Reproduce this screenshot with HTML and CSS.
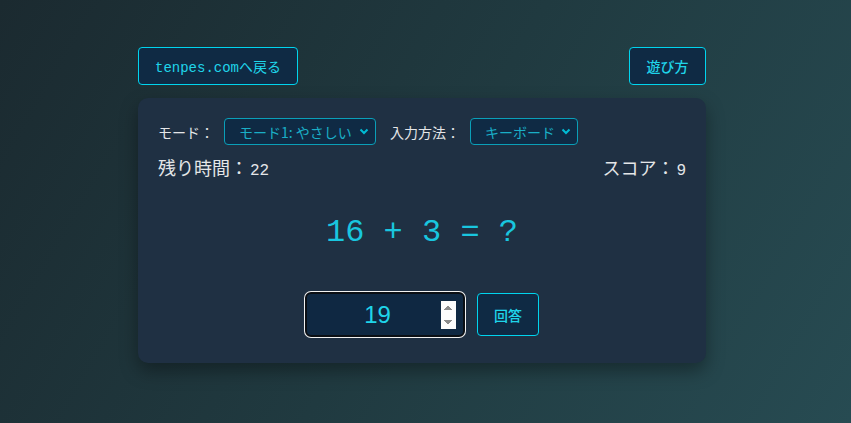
FILE: index.html
```html
<!DOCTYPE html>
<html lang="ja">
<head>
  <meta charset="UTF-8" />
  <meta name="viewport" content="width=device-width, initial-scale=1.0" />
  <title>足し算ゲーム</title>
  <link rel="stylesheet" href="styles.css">
</head>
<body>
  <div class="wrap">
    <div class="top-bar">
      <a href="#" class="btn btn-back">tenpes.comへ戻る</a>
      <button class="btn btn-help">遊び方</button>
    </div>

    <div class="card">
      <div class="settings">
        <label class="label">モード：</label>
        <select class="select select-mode">
          <option>モード1: やさしい</option>
          <option>モード2: ふつう</option>
          <option>モード3: むずかしい</option>
        </select>
        <label class="label label-input">入力方法：</label>
        <select class="select select-input">
          <option>キーボード</option>
          <option>ボタン</option>
        </select>
      </div>

      <div class="status">
        <div class="stat">残り時間：<span class="num">22</span></div>
        <div class="stat">スコア：<span class="num">9</span></div>
      </div>

      <div class="question">16 + 3 = ?</div>

      <div class="answer-row">
        <input type="number" class="answer" value="19" autofocus />
        <button class="btn btn-answer">回答</button>
      </div>
    </div>
  </div>
</body>
</html>
```

FILE: styles.css
```css
body {
  margin: 0;
  min-height: 100vh;
  background: linear-gradient(120deg, #1b2a30 0%, #203a40 50%, #274b52 100%);
  font-family: "Noto Sans CJK JP", "Noto Sans", sans-serif;
  color: #e4e6e8;
}

.wrap {
  width: 568px;
  margin-left: 138px;
  padding-top: 47px;
}

.top-bar {
  display: flex;
  justify-content: space-between;
  margin-bottom: 13px;
}

.btn {
  background: #0f2a44;
  color: #1fd5ea;
  border: 1px solid #00d4ee;
  border-radius: 4px;
  font-size: 14px;
  cursor: pointer;
  text-decoration: none;
  display: flex;
  align-items: center;
  justify-content: center;
  box-sizing: border-box;
  font-family: "Noto Sans CJK JP", "Noto Sans", sans-serif;
}

.btn-back {
  width: 160px;
  height: 38px;
  font-family: "Liberation Mono", "Noto Sans CJK JP", monospace;
  font-size: 14px;
}

.btn-help {
  width: 77px;
  height: 38px;
  font-weight: 500;
}

.card {
  background: #1f3043;
  border-radius: 10px;
  padding: 20px 20px 26px;
  box-shadow: 0 8px 18px rgba(0, 0, 0, 0.35);
}

.settings {
  display: flex;
  align-items: center;
  height: 27px;
  font-size: 14px;
}

.label {
  color: #e4e6e8;
  margin-right: 10px;
}

.label-input {
  margin-left: 14px;
}

.select {
  appearance: none;
  -webkit-appearance: none;
  height: 27px;
  box-sizing: border-box;
  background: #0f2a44 url("data:image/svg+xml;utf8,<svg xmlns='http://www.w3.org/2000/svg' width='10' height='7' viewBox='0 0 10 7'><path d='M1.5 1.5 L5 5 L8.5 1.5' fill='none' stroke='%2300bcd4' stroke-width='2'/></svg>") no-repeat right 6px center;
  color: #1aaec6;
  border: 1px solid #0a9fb8;
  border-radius: 4px;
  font-family: "Noto Sans CJK JP", "Noto Sans", sans-serif;
  font-size: 14px;
  padding: 0 20px 0 14px;
}

.select-mode { width: 152px; }
.select-input { width: 108px; }

.status {
  display: flex;
  justify-content: space-between;
  align-items: center;
  margin-top: 10px;
  height: 24px;
  font-size: 18px;
  font-weight: normal;
}

.num {
  font-family: "Liberation Mono", monospace;
  font-size: 16px;
  margin-left: 2px;
}

.question {
  text-align: center;
  font-family: "Liberation Mono", monospace;
  font-size: 32px;
  color: #19c6df;
  margin-top: 35px;
  line-height: 37px;
}

.answer-row {
  display: flex;
  justify-content: center;
  align-items: center;
  gap: 12px;
  margin-top: 41px;
}

.answer {
  width: 160px;
  height: 45px;
  box-sizing: border-box;
  padding: 5px 7px;
  background: #0f2842;
  color: #1fd5ea;
  border: 2px solid #0b0f14;
  border-radius: 6px;
  box-shadow: 0 0 0 1px #f2f2f2;
  outline: none;
  font-family: "Liberation Sans", Arial, sans-serif;
  font-size: 24px;
  text-align: center;
}

.answer:focus {
  outline: none;
}

.btn-answer {
  width: 62px;
  height: 43px;
  font-size: 14px;
  font-weight: 500;
}
```
